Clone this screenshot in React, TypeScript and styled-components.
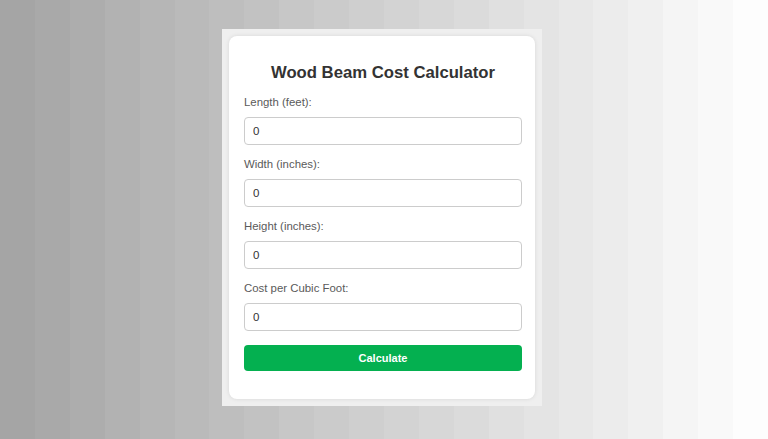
import { FC } from "react";
import styled, { createGlobalStyle } from "styled-components";

const STRIPES = 22;
const FROM = 165;
const TO = 253;

const stripeGradient = () => {
  const stops: string[] = [];
  for (let i = 0; i < STRIPES; i++) {
    const v = Math.round(FROM + ((TO - FROM) * i) / (STRIPES - 1));
    const c = `rgb(${v},${v},${v})`;
    const a = ((100 * i) / STRIPES).toFixed(3);
    const b = ((100 * (i + 1)) / STRIPES).toFixed(3);
    stops.push(`${c} ${a}%`, `${c} ${b}%`);
  }
  return `linear-gradient(to right, ${stops.join(", ")})`;
};

const GlobalStyle = createGlobalStyle`
  html, body {
    margin: 0;
    padding: 0;
  }
  body {
    font-family: "Liberation Sans", Arial, sans-serif;
  }
`;

const Page = styled.div`
  width: 768px;
  height: 439px;
  box-sizing: border-box;
  padding: 0 4px 4px 0;
  display: flex;
  align-items: center;
  justify-content: center;
  background: ${stripeGradient()};
`;

const Frame = styled.div`
  width: 320px;
  height: 377px;
  box-sizing: border-box;
  padding: 7px;
  background: #efefef;
  display: flex;
`;

const Card = styled.form`
  flex: 1;
  display: flex;
  flex-direction: column;
  background: #ffffff;
  border-radius: 8px;
  box-shadow: 0 0 4px rgba(0, 0, 0, 0.1);
  padding: 15px 13px 28px 15px;
`;

const Title = styled.h2`
  margin: 11px 0 11px;
  font-size: 16.7px;
  line-height: 22px;
  font-weight: bold;
  text-align: center;
  color: #333333;
`;

const Label = styled.label`
  display: block;
  font-size: 11.4px;
  line-height: 14px;
  color: #5a5a5a;
  margin-bottom: 8px;
`;

const Input = styled.input`
  display: block;
  width: 100%;
  height: 28px;
  box-sizing: border-box;
  margin: 0 0 12px;
  padding: 0 8px;
  border: 1px solid #cccccc;
  border-radius: 4px;
  font-family: inherit;
  font-size: 11.5px;
  color: #333333;
  background: #ffffff;
`;

const Button = styled.button`
  margin-top: 2px;
  height: 26px;
  width: 100%;
  border: none;
  border-radius: 4px;
  background: #04b050;
  color: #ffffff;
  font-family: inherit;
  font-size: 11px;
  font-weight: bold;
  cursor: pointer;
`;

const fields = [
  "Length (feet):",
  "Width (inches):",
  "Height (inches):",
  "Cost per Cubic Foot:",
];

const App: FC = () => {
  return (
    <>
      <GlobalStyle />
      <Page>
        <Frame>
          <Card onSubmit={(e) => e.preventDefault()}>
            <Title>Wood Beam Cost Calculator</Title>
            {fields.map((f, i) => (
              <div key={f}>
                <Label htmlFor={`field-${i}`}>{f}</Label>
                <Input id={`field-${i}`} type="number" defaultValue={0} />
              </div>
            ))}
            <Button type="submit">Calculate</Button>
          </Card>
        </Frame>
      </Page>
    </>
  );
};

export default App;
